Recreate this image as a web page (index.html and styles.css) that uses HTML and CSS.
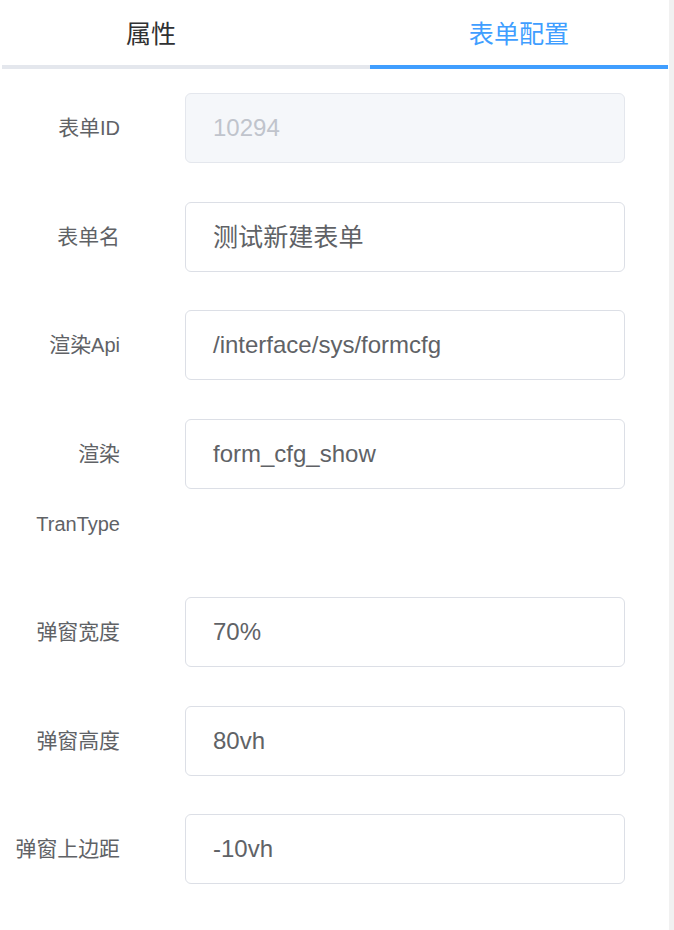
FILE: index.html
```html
<!DOCTYPE html>
<html lang="zh">
<head>
<meta charset="utf-8">
<link rel="stylesheet" href="styles.css">
</head>
<body>
<div class="page">
  <div class="panel">
    <div class="tabs">
      <div class="tab tab-left"><span class="zh">属性</span></div>
      <div class="tab tab-active"><span class="zh">表单配置</span></div>
    </div>
    <div class="form">
      <div class="row">
        <div class="label"><span class="zh">表单</span>ID</div>
        <div class="input disabled">10294</div>
      </div>
      <div class="row">
        <div class="label"><span class="zh">表单名</span></div>
        <div class="input"><span class="zh">测试新建表单</span></div>
      </div>
      <div class="row">
        <div class="label"><span class="zh">渲染</span>Api</div>
        <div class="input">/interface/sys/formcfg</div>
      </div>
      <div class="row">
        <div class="label"><span class="zh">渲染</span>TranType</div>
        <div class="input">form_cfg_show</div>
      </div>
      <div class="row">
        <div class="label"><span class="zh">弹窗宽度</span></div>
        <div class="input">70%</div>
      </div>
      <div class="row">
        <div class="label"><span class="zh">弹窗高度</span></div>
        <div class="input">80vh</div>
      </div>
      <div class="row">
        <div class="label"><span class="zh">弹窗上边距</span></div>
        <div class="input">-10vh</div>
      </div>
    </div>
  </div>
  <div class="gutter"></div>
</div>
</body>
</html>
```

FILE: styles.css
```css
html, body {
  margin: 0;
  padding: 0;
  background: #ffffff;
}
body {
  font-family: "Liberation Sans", "Noto Sans CJK SC", sans-serif;
}
.zh {
  font-size: 1.045em;
}
.page {
  display: flex;
  width: 674px;
  height: 930px;
  overflow: hidden;
}
.panel {
  width: 669px;
  background: #ffffff;
}
.gutter {
  width: 5px;
  background: #f1f1f1;
}
.tabs {
  display: flex;
  padding-left: 2px;
  width: 666px;
}
.tab {
  height: 65px;
  line-height: 68px;
  font-size: 24px;
  text-align: center;
  box-sizing: content-box;
}
.tab-left {
  flex: 1;
  color: #303133;
  padding-right: 70px;
  border-bottom: 4px solid #e4e7ed;
}
.tab-active {
  width: 298px;
  color: #409eff;
  border-bottom: 4px solid #409eff;
}
.form {
  padding-top: 24px;
}
.row {
  display: grid;
  grid-template-columns: 120px 440px;
  column-gap: 65px;
  margin-bottom: 38.5px;
  align-items: start;
}
.label {
  font-size: 20px;
  line-height: 70px;
  color: #606266;
  text-align: right;
}
.input {
  height: 70px;
  box-sizing: border-box;
  border: 1px solid #dcdfe6;
  border-radius: 6px;
  padding-left: 27px;
  font-size: 24px;
  line-height: 68px;
  color: #606266;
  background: #ffffff;
}
.input.disabled {
  background: #f5f7fa;
  border-color: #e4e7ed;
  color: #c0c4cc;
}
```
